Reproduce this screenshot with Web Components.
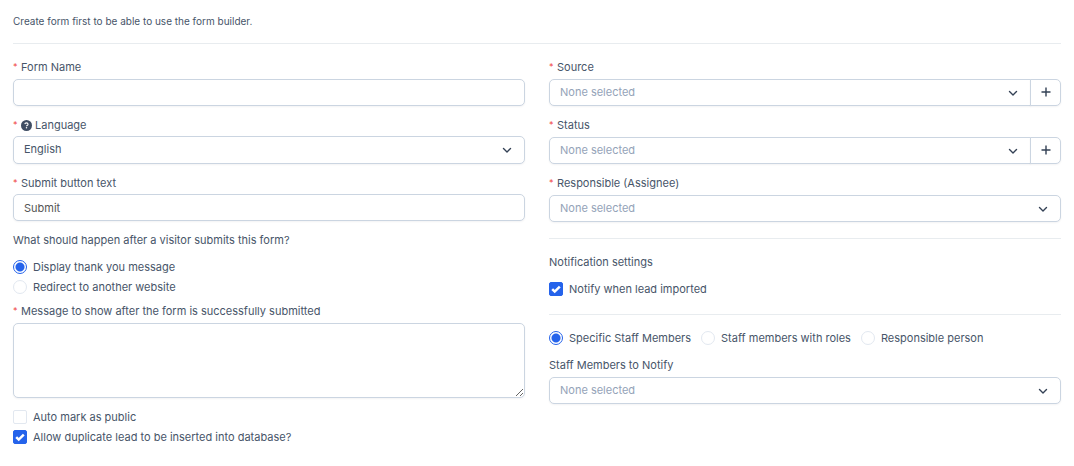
<!DOCTYPE html>
<html lang="en">
<head>
<meta charset="utf-8">
<title>Web to lead form</title>
<style>
  body {
    margin: 0;
    background: #fff;
    color: #475569;
    font: 11px/16px Inter, "Liberation Sans", sans-serif;
    --line: #cbd5e1;
    --muted: #94a3b8;
    --rule: #e8ecef;
    --accent: #2563eb;
    --danger: #ef4444;
  }
</style>
</head>
<body>
<lead-form></lead-form>
<script>
const CONTROL_CSS = `
  :host { display: block; }
  * { box-sizing: border-box; }
  label { display: flex; align-items: center; }
  .star { color: var(--danger); width: 8px; flex: none; font-size: 9px; }
  input, select, textarea, button {
    font: inherit; color: inherit; margin: 0; background-color: #fff;
    border: 1px solid var(--line); border-radius: 5px;
    box-shadow: 0 1px 2px rgb(15 23 42 / 5%);
  }
  input, select, textarea { display: block; width: 100%; padding: 0 10px; }
  input, select { height: var(--control-height, 27px); }
  input { color: #555; }
  .control { margin-top: var(--label-gap, 4px); }
`;

class BaseElement extends HTMLElement {
  connectedCallback() {
    if (this.shadowRoot) return;
    this.attachShadow({ mode: 'open' }).innerHTML = this.render();
  }
  attr(name) { return this.getAttribute(name) || ''; }
  labelMarkup() {
    return `<label for="control">${this.hasAttribute('required') ? '<span class="star">*</span>' : ''}<slot name="hint"></slot>${this.attr('label')}</label>`;
  }
}

customElements.define('text-field', class extends BaseElement {
  render() {
    return `<style>${CONTROL_CSS}</style>${this.labelMarkup()}
      <div class="control"><input id="control" type="text" value="${this.attr('value')}"></div>`;
  }
});

customElements.define('area-field', class extends BaseElement {
  render() {
    return `<style>${CONTROL_CSS}
      textarea { height: 75px; padding: 6px 10px; resize: vertical; }
      </style>${this.labelMarkup()}
      <div class="control"><textarea id="control"></textarea></div>`;
  }
});

customElements.define('select-field', class extends BaseElement {
  render() {
    const add = this.hasAttribute('addable');
    return `<style>${CONTROL_CSS}
      .control { display: flex; }
      .box { position: relative; flex: 1; }
      select { appearance: none; padding: 0 32px 2px 10px; }
      .empty select { color: var(--muted); }
      .chevron { position: absolute; right: 13px; top: 50%; margin-top: -5px; width: 10px; height: 10px; pointer-events: none; }
      svg { display: block; fill: none; stroke: #334155; }
      .addable select { border-radius: 5px 0 0 5px; }
      button { display: grid; place-items: center; width: 31px; margin-left: -1px; padding: 0 0 2px; border-radius: 0 5px 5px 0; z-index: 1; }
      </style>${this.labelMarkup()}
      <div class="control ${add ? 'addable' : ''} ${this.hasAttribute('empty') ? 'empty' : ''}">
        <div class="box">
          <select id="control"><option>${this.attr('value')}</option></select>
          <svg class="chevron" viewBox="0 0 10 10" stroke-width="1.4" stroke-linecap="round" stroke-linejoin="round"><path d="M1.5 3.6 5 7 8.5 3.6"/></svg>
        </div>
        ${add ? `<button type="button" aria-label="Add ${this.attr('label')}"><svg width="10" height="10" viewBox="0 0 10 10" stroke-width="1.4"><path d="M5 .5v9M.5 5h9"/></svg></button>` : ''}
      </div>`;
  }
});

customElements.define('help-icon', class extends BaseElement {
  render() {
    return `<style>
      :host { display: block; margin-right: 3px; }
      svg { display: block; }
      </style>
      <svg width="11" height="11" viewBox="0 0 512 512" aria-hidden="true"><circle cx="256" cy="256" r="256" fill="#3f4d63"/>
      <path d="M178 190c4-34 30-56 72-56 46 0 78 22 78 62 0 32-20 48-42 60-18 10-30 18-30 38" fill="none" stroke="#fff" stroke-width="50"/><circle cx="256" cy="362" r="34" fill="#fff"/></svg>`;
  }
});

/* Radios share one shadow root so that the browser treats them as one group. */
customElements.define('choice-list', class extends BaseElement {
  render() {
    const type = this.attr('type');
    const checked = this.attr('checked');
    const rows = this.attr('options').split('|').map((text, i) => `
      <div class="row"><input type="${type}" id="c${i}" name="${this.attr('name')}" ${text === checked ? 'checked' : ''}><label for="c${i}">${text}</label></div>`).join('');
    return `<style>
      :host { display: flex; flex-direction: column; }
      :host([inline]) { flex-direction: row; flex-wrap: wrap; column-gap: 10px; }
      .row { display: flex; align-items: center; height: 20px; gap: 6px; }
      input { appearance: none; box-sizing: border-box; flex: none; width: 14px; height: 14px; margin: 0; border: 1px solid #e2e8f0; background: #fff; }
      input[type=radio] { border-radius: 50%; }
      input[type=checkbox] { border-radius: 2px; }
      input[type=radio]:checked { border-color: var(--accent); background: radial-gradient(circle, var(--accent) 4px, #fff 5px); }
      input[type=checkbox]:checked { border-color: var(--accent); background: var(--accent) url('data:image/svg+xml,<svg xmlns="http://www.w3.org/2000/svg" viewBox="0 0 12 12"><path d="M2.2 6.2 4.7 8.6 9.8 3.6" fill="none" stroke="white" stroke-width="2.5"/></svg>'); }
      </style>${rows}`;
  }
});

customElements.define('lead-form', class extends BaseElement {
  render() {
    return `<style>
      :host { display: block; padding: 13px; }
      p { margin: 0; }
      .intro { font-size: 10px; line-height: 16px; }
      hr { height: 1px; border: 0; margin: 0; background: var(--rule); }
      .top { margin: 14px 0 15px; }
      .columns { display: grid; grid-template-columns: 1fr 1fr; gap: 24px; align-items: start; }
      .column { display: flex; flex-direction: column; }
      .fields { display: flex; flex-direction: column; gap: 11px; }
      .snug { --label-gap: 3px; }
      .tall { --control-height: 28px; }
      .after { margin-top: 11px; }
      .near { margin-top: 9px; }
      .tight { margin-top: 6px; }
      .rule { margin-top: 16px; }
      .section { margin-top: 15px; }
      .group { margin-top: 13px; }
      </style>
      <p class="intro">Create form first to be able to use the form builder.</p>
      <hr class="top">
      <form class="columns">
        <div class="column">
          <div class="fields">
            <text-field label="Form Name" required></text-field>
            <select-field class="snug tall" label="Language" value="English" required><help-icon slot="hint"></help-icon></select-field>
            <text-field class="snug" label="Submit button text" value="Submit" required></text-field>
          </div>
          <p class="after" id="after">What should happen after a visitor submits this form?</p>
          <choice-list class="near" type="radio" name="action" role="radiogroup" aria-labelledby="after" options="Display thank you message|Redirect to another website" checked="Display thank you message"></choice-list>
          <area-field class="tight" label="Message to show after the form is successfully submitted" required></area-field>
          <choice-list class="near" type="checkbox" name="flags" options="Auto mark as public|Allow duplicate lead to be inserted into database?" checked="Allow duplicate lead to be inserted into database?"></choice-list>
        </div>
        <div class="column">
          <div class="fields">
            <select-field label="Source" value="None selected" required empty addable></select-field>
            <select-field label="Status" value="None selected" required empty addable></select-field>
            <select-field label="Responsible (Assignee)" value="None selected" required empty></select-field>
          </div>
          <hr class="rule">
          <p class="section">Notification settings</p>
          <choice-list class="near" type="checkbox" name="notify" options="Notify when lead imported" checked="Notify when lead imported"></choice-list>
          <hr class="section">
          <choice-list class="group" inline type="radio" name="who" role="radiogroup" aria-label="Who to notify" options="Specific Staff Members|Staff members with roles|Responsible person" checked="Specific Staff Members"></choice-list>
          <select-field class="near" label="Staff Members to Notify" value="None selected" empty></select-field>
        </div>
      </form>`;
  }
});
</script>
</body>
</html>
